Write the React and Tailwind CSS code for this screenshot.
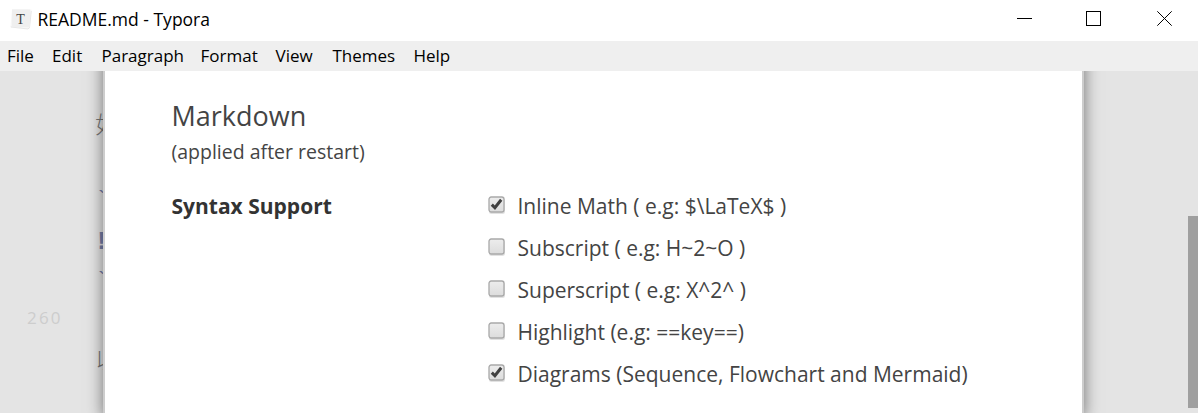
import React from "react";

const MENU = [
  { label: "File", cls: "w-[45px]" },
  { label: "Edit", cls: "w-[49.5px]" },
  { label: "Paragraph", cls: "w-[99px]" },
  { label: "Format", cls: "w-[75px]" },
  { label: "View", cls: "w-[57px]" },
  { label: "Themes", cls: "w-[81px]" },
  { label: "Help", cls: "w-[60px]" },
];

const OPTIONS = [
  { label: "Inline Math ( e.g: $\\LaTeX$ )", on: true },
  { label: "Subscript ( e.g: H~2~O )", on: false },
  { label: "Superscript ( e.g: X^2^ )", on: false },
  { label: "Highlight (e.g: ==key==)", on: false },
  { label: "Diagrams (Sequence, Flowchart and Mermaid)", on: true },
];

function AppIcon() {
  return (
    <svg width="22" height="22" viewBox="0 0 22 22" className="shrink-0">
      <path d="M2 1 L21.5 1.5 L19.5 21 L0.5 19 Z" fill="#f6f6f6" />
      <path d="M0.8 19 L18 21 L19.5 19.5 L21.3 3" fill="none" stroke="#e2e2e2" strokeWidth="0.8" />
      <rect x="2" y="1.5" width="18" height="17.5" fill="#efefef" />
      <text x="10.5" y="15.5" textAnchor="middle" fontSize="14" fontFamily="Liberation Serif, serif" fill="#444">T</text>
    </svg>
  );
}

function Checkbox({ on }) {
  return (
    <svg width="18" height="19" viewBox="0 0 18 19" className="shrink-0">
      <defs>
        <linearGradient id="boxFill" x1="0" y1="0" x2="0" y2="1">
          <stop offset="0" stopColor="#ededed" />
          <stop offset="1" stopColor="#dcdcdc" />
        </linearGradient>
      </defs>
      <rect x="1" y="2" width="16" height="16" rx="2.5" fill="#e2e2e2" />
      <rect x="1" y="1" width="15" height="15" rx="2.2" fill="url(#boxFill)" stroke="#a9a9a9" strokeWidth="1.3" />
      {on && <path d="M3.8 8.6 L6.9 11.7 L13.2 3.8" fill="none" stroke="#404040" strokeWidth="3" />}
    </svg>
  );
}

export default function App() {
  return (
    <div className="flex h-[413px] w-[1198px] flex-col overflow-hidden bg-white font-['Open_Sans',sans-serif]">
      <header className="flex h-[41px] shrink-0 items-center justify-between bg-white pl-2.5">
        <div className="flex items-center gap-[5.5px] pb-[4px]">
          <AppIcon />
          <span className="whitespace-nowrap text-[17.5px] font-normal leading-[24px] text-black">README.md - Typora</span>
        </div>
        <div className="flex h-full items-start pr-[26px] pt-[11px]">
          <svg width="15" height="15" viewBox="0 0 15 15" className="mr-[54px] shrink-0"><path d="M0 7.5H15" stroke="#000" /></svg>
          <svg width="15" height="15" viewBox="0 0 15 15" className="mr-[56px] shrink-0"><rect x="0.5" y="0.5" width="14" height="14" fill="none" stroke="#000" /></svg>
          <svg width="15" height="15" viewBox="0 0 15 15" className="shrink-0"><path d="M0.3 0.3L14.7 14.7M14.7 0.3L0.3 14.7" stroke="#000" /></svg>
        </div>
      </header>
      <nav className="flex h-[30px] shrink-0 items-center bg-[#efefef] pl-[7px] text-[17px] font-normal text-black">
        {MENU.map((m) => (
          <span key={m.label} className={`shrink-0 whitespace-nowrap ${m.cls}`}>{m.label}</span>
        ))}
      </nav>
      <main className="flex h-[342px] overflow-hidden bg-[#e4e4e4]">
        <aside className="flex w-[103px] shrink-0 flex-col overflow-hidden whitespace-nowrap font-['Noto_Sans_CJK_SC',sans-serif] font-light text-[#777]">
          <div className="mt-[38px] h-[28px] pl-[95px] text-[23px] leading-[28px]">如</div>
          <div className="mt-[50px] h-[28px] pl-[95px] font-['Liberation_Mono',monospace] text-[22px] leading-[28px] text-[#7780a8]">`</div>
          <div className="mt-[14px] h-[28px] pl-[94px] font-['Liberation_Mono',monospace] text-[25px] font-bold leading-[28px] text-[#7780a8]">!</div>
          <div className="mt-[11px] h-[28px] pl-[95px] font-['Liberation_Mono',monospace] text-[22px] leading-[28px] text-[#7780a8]">`</div>
          <div className="mt-[8px] h-[28px] pl-[27px] font-['Open_Sans',sans-serif] text-[17px] font-normal leading-[28px] tracking-[2.2px] text-[#cdcdcd]">260</div>
          <div className="mt-[12px] h-[28px] pl-[95px] text-[23px] leading-[28px]">以</div>
        </aside>
        <section className="relative -mt-5 flex w-[981px] shrink-0 flex-col border-x-2 border-[#cdcdcd] bg-white pl-[66.5px] pt-[47px] text-[#444] shadow-[0_5px_15px_rgba(0,0,0,0.5)]">
          <h2 className="h-[36px] whitespace-nowrap text-[27px] font-normal leading-[36px]">Markdown</h2>
          <p className="mt-[4px] h-[28px] whitespace-nowrap text-[19.5px] font-normal leading-[28px]">(applied after restart)</p>
          <div className="mt-[19px] flex">
            <h3 className="w-[316px] shrink-0 whitespace-nowrap text-[21px] font-bold leading-[42px] text-[#333]">Syntax Support</h3>
            <ul>
              {OPTIONS.map((o) => (
                <li key={o.label} className="flex h-[42px] items-center gap-3">
                  <span className="mb-[2px] flex"><Checkbox on={o.on} /></span>
                  <span className="whitespace-nowrap text-[21px] font-normal leading-[42px]">{o.label}</span>
                </li>
              ))}
            </ul>
          </div>
        </section>
        <div className="flex flex-1 justify-end pt-[145px]">
          <div className="h-[192px] w-[10px] bg-[#9f9f9f]" />
        </div>
      </main>
    </div>
  );
}
